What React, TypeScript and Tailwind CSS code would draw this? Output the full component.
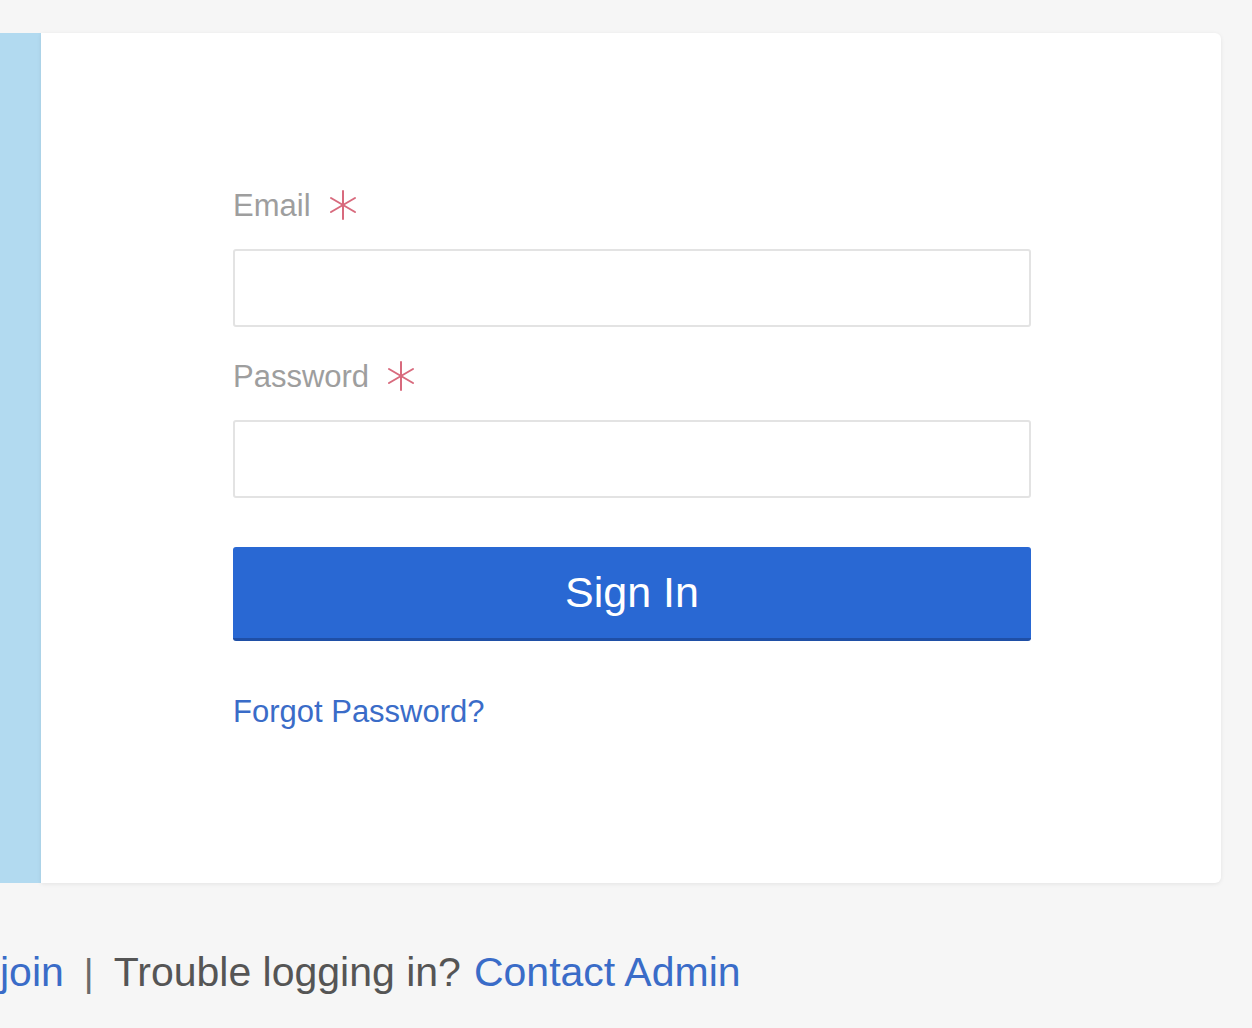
import React from "react";

const Asterisk = () => (
  <svg width="30" height="32" viewBox="0 0 30 32" className="shrink-0">
    <g stroke="#d86a7d" strokeWidth="2" strokeLinecap="round">
      <line x1="15" y1="2" x2="15" y2="30" />
      <line x1="3" y1="9" x2="27" y2="23" />
      <line x1="3" y1="23" x2="27" y2="9" />
    </g>
  </svg>
);

const Field = ({ label, type }: { label: string; type: string }) => (
  <div className="flex flex-col">
    <label className="flex items-center gap-[17px] h-[40px] text-[31px] leading-none text-[#9e9e9e]">
      {label}
      <Asterisk />
    </label>
    <input
      type={type}
      className="mt-[24px] h-[78px] w-full rounded-[3px] border-2 border-[#e3e3e3] bg-white px-4 text-[28px] outline-none"
    />
  </div>
);

export default function App() {
  return (
    <div className="min-h-screen overflow-hidden bg-[#f6f6f6] pt-[33px] font-['Liberation_Sans',Arial,sans-serif]">
      {/* Card */}
      <div className="mr-[31px] flex h-[850px]">
        <div className="w-[41px] shrink-0 bg-[#b2daf0]" />
        <div className="flex-1 rounded-r-[6px] bg-white shadow-[0_1px_4px_rgba(0,0,0,0.08)]">
          <form className="ml-[192px] mt-[152px] flex w-[798px] flex-col">
            <Field label="Email" type="email" />
            <div className="mt-[29px]">
              <Field label="Password" type="password" />
            </div>
            <button
              type="button"
              className="mt-[49px] h-[94px] w-full rounded-[3px] border-b-[3px] border-[#1f4fa6] bg-[#2968d3] text-[43px] text-white"
            >
              Sign In
            </button>
            <a href="#" className="mt-[55px] text-[31px] leading-none text-[#3a6cc8]">
              Forgot Password?
            </a>
          </form>
        </div>
      </div>

      {/* Footer */}
      <div className="mt-[69px] flex items-center whitespace-nowrap text-[41px] leading-none">
        <a href="#" className="text-[#3a6cc8]">join</a>
        <span className="mx-[20px] text-[38px] text-[#6a6a6a]">|</span>
        <span className="text-[#555]">Trouble logging in?</span>
        <a href="#" className="ml-[13px] text-[#3a6cc8]">Contact Admin</a>
      </div>
    </div>
  );
}
